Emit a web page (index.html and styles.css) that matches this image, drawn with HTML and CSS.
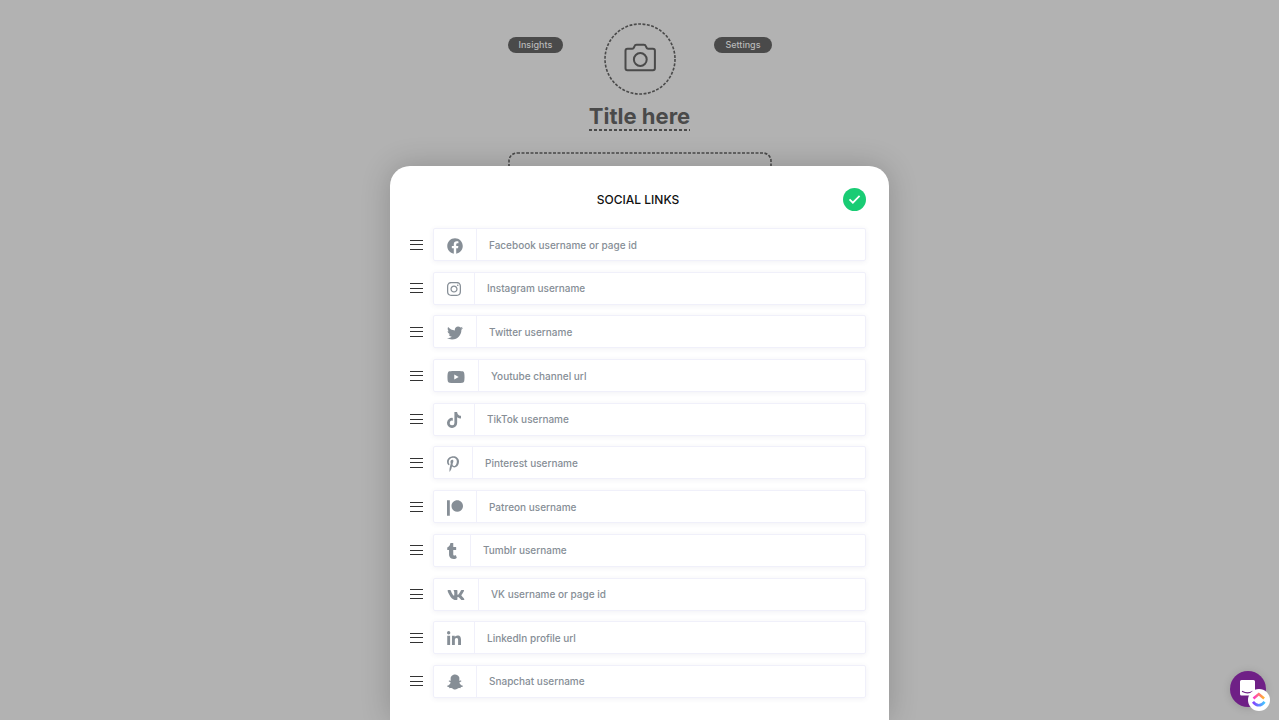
FILE: index.html
```html
<!DOCTYPE html>
<html lang="en">
<head>
<meta charset="utf-8">
<meta name="viewport" content="width=device-width, initial-scale=1">
<title>Social links</title>
<link rel="stylesheet" href="styles.css">
</head>
<body>
<main class="page">
  <div class="profile">
    <button class="pill" type="button">Insights</button>
    <button class="avatar" type="button" aria-label="Upload photo">
      <svg class="avatar-art" viewBox="0 0 72 72" fill="none" stroke="currentColor">
        <circle cx="36" cy="36" r="35" stroke-width="1.6" stroke-dasharray="2.9 1.5"/>
        <path d="M23.500 25.700h4.800q1.200 0 1.600-1.100l.6-1.500q.5-1.400 2-1.400h7.400q1.500 0 2 1.400l.6 1.500q.4 1.100 1.600 1.100h4.800q2 0 2 2v17.600q0 2-2 2h-25.400q-2 0-2-2V27.700q0-2 2-2z" stroke-width="2"/>
        <circle cx="36.300" cy="36.500" r="6.400" stroke-width="2"/>
      </svg>
    </button>
    <button class="pill" type="button">Settings</button>
  </div>
  <h1 class="title">Title here</h1>
  <div class="block">
    <svg class="block-outline" width="100%" height="100%" fill="none" stroke="currentColor"><rect x="1" y="1" width="262" height="58" rx="8" stroke-width="1.600" stroke-dasharray="3 1.500"/></svg>
  </div>
</main>

<section class="modal" role="dialog" aria-labelledby="modal-title">
  <header class="modal-head">
    <h2 class="modal-title" id="modal-title">SOCIAL LINKS</h2>
    <button class="done" type="button" aria-label="Save">
      <svg viewBox="0 0 24 24" fill="none" stroke="currentColor" stroke-width="1.800"><path d="M6.800 11.800l3.500 3.500 7-7"/></svg>
    </button>
  </header>
  <ul class="links">
    <li class="row"><button class="grip" type="button" aria-label="Move Facebook"></button><div class="field"><label class="brand" for="facebook"><svg viewBox="0 0 512 512" width="16" height="16" role="img" aria-label="Facebook"><path d="M504 256C504 119 393 8 256 8S8 119 8 256c0 123.780 90.690 226.380 209.250 245V327.690h-63V256h63v-54.640c0-62.150 37-96.480 93.670-96.480 27.140 0 55.520 4.840 55.520 4.840v61h-31.280c-30.800 0-40.410 19.120-40.410 38.730V256h68.780l-11 71.690h-57.780V501C413.310 482.380 504 379.780 504 256z"/></svg></label><input class="entry" id="facebook" type="text" placeholder="Facebook username or page id"></div></li>
    <li class="row"><button class="grip" type="button" aria-label="Move Instagram"></button><div class="field"><label class="brand" for="instagram"><svg viewBox="0 0 448 512" width="14" height="16" role="img" aria-label="Instagram"><path d="M224.100 141c-63.600 0-114.900 51.300-114.900 114.900s51.300 114.900 114.900 114.900S339 319.500 339 255.900 287.700 141 224.100 141zm0 189.600c-41.100 0-74.700-33.500-74.700-74.700s33.500-74.700 74.700-74.700 74.700 33.500 74.700 74.700-33.600 74.700-74.700 74.700zm146.400-194.300c0 14.900-12 26.800-26.800 26.800-14.900 0-26.800-12-26.800-26.800s12-26.800 26.800-26.800 26.800 12 26.800 26.800zm76.100 27.200c-1.700-35.900-9.900-67.700-36.200-93.900-26.200-26.200-58-34.400-93.900-36.200-37-2.100-147.900-2.100-184.900 0-35.800 1.700-67.600 9.900-93.900 36.100s-34.400 58-36.200 93.900c-2.100 37-2.100 147.900 0 184.900 1.700 35.900 9.900 67.700 36.200 93.900s58 34.400 93.900 36.200c37 2.100 147.900 2.100 184.900 0 35.900-1.700 67.700-9.900 93.900-36.200 26.200-26.200 34.400-58 36.200-93.900 2.100-37 2.100-147.800 0-184.800zM398.800 388c-7.800 19.600-22.900 34.700-42.600 42.600-29.500 11.700-99.500 9-132.100 9s-102.700 2.600-132.100-9c-19.600-7.800-34.700-22.900-42.600-42.600-11.700-29.500-9-99.500-9-132.100s-2.600-102.700 9-132.100c7.800-19.600 22.900-34.700 42.600-42.600 29.500-11.700 99.500-9 132.100-9s102.700-2.600 132.100 9c19.600 7.800 34.700 22.900 42.600 42.600 11.700 29.500 9 99.500 9 132.100s2.700 102.700-9 132.100z"/></svg></label><input class="entry" id="instagram" type="text" placeholder="Instagram username"></div></li>
    <li class="row"><button class="grip" type="button" aria-label="Move Twitter"></button><div class="field"><label class="brand" for="twitter"><svg viewBox="0 0 512 512" width="16" height="16" role="img" aria-label="Twitter"><path d="M459.370 151.716c.325 4.548.325 9.097.325 13.645 0 138.720-105.583 298.558-298.558 298.558-59.452 0-114.680-17.219-161.137-47.106 8.447.974 16.568 1.299 25.340 1.299 49.055 0 94.213-16.568 130.274-44.832-46.132-.975-84.792-31.188-98.112-72.772 6.498.974 12.995 1.624 19.818 1.624 9.421 0 18.843-1.300 27.614-3.573-48.081-9.747-84.143-51.980-84.143-102.985v-1.299c13.969 7.797 30.214 12.670 47.431 13.319-28.264-18.843-46.781-51.005-46.781-87.391 0-19.492 5.197-37.360 14.294-52.954 51.655 63.675 129.300 105.258 216.365 109.807-1.624-7.797-2.599-15.918-2.599-24.040 0-57.828 46.782-104.934 104.934-104.934 30.213 0 57.502 12.670 76.670 33.137 23.715-4.548 46.456-13.320 66.599-25.340-7.798 24.366-24.366 44.833-46.132 57.827 21.117-2.273 41.584-8.122 60.426-16.243-14.292 20.791-32.161 39.308-52.628 54.253z"/></svg></label><input class="entry" id="twitter" type="text" placeholder="Twitter username"></div></li>
    <li class="row"><button class="grip" type="button" aria-label="Move Youtube"></button><div class="field"><label class="brand" for="youtube"><svg viewBox="0 0 576 512" width="18" height="16" role="img" aria-label="Youtube"><path d="M549.655 124.083c-6.281-23.650-24.787-42.276-48.284-48.597C458.781 64 288 64 288 64S117.220 64 74.629 75.486c-23.497 6.322-42.003 24.947-48.284 48.597-11.412 42.867-11.412 132.305-11.412 132.305s0 89.438 11.412 132.305c6.281 23.650 24.787 41.500 48.284 47.821C117.220 448 288 448 288 448s170.780 0 213.371-11.486c23.497-6.321 42.003-24.171 48.284-47.821 11.412-42.867 11.412-132.305 11.412-132.305s0-89.438-11.412-132.305zm-317.510 213.508V175.185l142.739 81.205-142.739 81.201z"/></svg></label><input class="entry" id="youtube" type="text" placeholder="Youtube channel url"></div></li>
    <li class="row"><button class="grip" type="button" aria-label="Move TikTok"></button><div class="field"><label class="brand" for="tiktok"><svg viewBox="0 0 448 512" width="14" height="16" role="img" aria-label="TikTok"><path d="M448 209.910a210.060 210.060 0 0 1-122.770-39.250V349.380A162.550 162.550 0 1 1 185 188.310V278.200a74.620 74.620 0 1 0 52.230 71.180V0h88a121.180 121.180 0 0 0 1.860 22.170A122.180 122.180 0 0 0 381 102.390a121.430 121.430 0 0 0 67 20.140z"/></svg></label><input class="entry" id="tiktok" type="text" placeholder="TikTok username"></div></li>
    <li class="row"><button class="grip" type="button" aria-label="Move Pinterest"></button><div class="field"><label class="brand" for="pinterest"><svg viewBox="0 0 384 512" width="12" height="16" role="img" aria-label="Pinterest"><path d="M204 6.500C101.400 6.500 0 74.900 0 185.600 0 256 39.600 296 63.600 296c9.900 0 15.600-27.600 15.600-35.400 0-9.300-23.700-29.100-23.700-67.800 0-80.400 61.200-137.400 140.400-137.400 68.100 0 118.500 38.700 118.500 109.800 0 53.100-21.300 152.700-90.300 152.700-24.900 0-46.200-18-46.200-43.800 0-37.800 26.400-74.400 26.400-113.400 0-66.200-93.900-54.200-93.900 25.800 0 16.800 2.100 35.400 9.600 50.700-13.800 59.400-42 147.900-42 209.100 0 18.900 2.700 37.500 4.500 56.400 3.400 3.800 1.700 3.400 6.900 1.500 50.400-69 48.600-82.500 71.400-172.800 12.300 23.400 44.100 36 69.300 36 106.200 0 153.900-103.500 153.900-196.800C384 71.300 298.200 6.500 204 6.500z"/></svg></label><input class="entry" id="pinterest" type="text" placeholder="Pinterest username"></div></li>
    <li class="row"><button class="grip" type="button" aria-label="Move Patreon"></button><div class="field"><label class="brand" for="patreon"><svg viewBox="0 0 512 512" width="16" height="16" role="img" aria-label="Patreon"><path d="M512 194.800c0 101.300-82.400 183.800-183.800 183.800-101.700 0-184.400-82.400-184.400-183.800 0-101.600 82.700-184.300 184.400-184.300C429.600 10.500 512 93.200 512 194.800zM0 501.500h90v-491H0v491z"/></svg></label><input class="entry" id="patreon" type="text" placeholder="Patreon username"></div></li>
    <li class="row"><button class="grip" type="button" aria-label="Move Tumblr"></button><div class="field"><label class="brand" for="tumblr"><svg viewBox="0 0 320 512" width="10" height="16" role="img" aria-label="Tumblr"><path d="M309.800 480.300c-13.600 14.500-50 31.700-97.400 31.700-120.800 0-147-88.800-147-140.600v-144H17.900c-5.500 0-10-4.500-10-10v-68c0-7.200 4.500-13.600 11.300-16 62-21.800 81.500-76 84.300-117.100.8-11 6.500-16.300 16.100-16.300h70.900c5.500 0 10 4.500 10 10v115.200h83c5.500 0 10 4.400 10 9.900v81.700c0 5.500-4.500 10-10 10h-83.400V360c0 34.200 23.700 53.600 68 35.800 4.800-1.900 9-3.200 12.700-2.200 3.500.9 5.800 3.400 7.400 7.900l22 64.300c1.800 5 3.300 10.600-.4 14.500z"/></svg></label><input class="entry" id="tumblr" type="text" placeholder="Tumblr username"></div></li>
    <li class="row"><button class="grip" type="button" aria-label="Move VK"></button><div class="field"><label class="brand" for="vk"><svg viewBox="0 0 576 512" width="18" height="16" role="img" aria-label="VK"><path d="M545 117.700c3.700-12.500 0-21.700-17.800-21.700h-58.900c-15 0-21.900 7.900-25.600 16.700 0 0-30 73.100-72.400 120.500-13.700 13.700-20 18.100-27.500 18.100-3.700 0-9.400-4.400-9.400-16.900V117.700c0-15-4.200-21.700-16.600-21.700h-92.600c-9.400 0-15 7-15 13.500 0 14.200 21.200 17.500 23.400 57.500v86.800c0 19-3.400 22.500-10.900 22.500-20 0-68.600-73.400-97.400-157.400-5.800-16.300-11.500-22.900-26.600-22.900H38.800c-16.800 0-20.200 7.900-20.200 16.700 0 15.600 20 93.100 93.100 195.500C160.400 378.100 229 416 291.400 416c37.500 0 42.100-8.400 42.100-22.900 0-66.800-3.400-73.100 15.400-73.100 8.700 0 23.700 4.400 58.700 38.100 40 40 46.600 57.900 69 57.900h58.900c16.800 0 25.300-8.400 20.400-25-11.200-34.900-86.900-106.700-90.300-111.500-8.700-11.200-6.200-16.200 0-26.200.1-.1 72-101.300 79.400-135.600z"/></svg></label><input class="entry" id="vk" type="text" placeholder="VK username or page id"></div></li>
    <li class="row"><button class="grip" type="button" aria-label="Move LinkedIn"></button><div class="field"><label class="brand" for="linkedin"><svg viewBox="0 0 448 512" width="14" height="16" role="img" aria-label="LinkedIn"><path d="M100.280 448H7.400V148.900h92.880zM53.790 108.100C24.090 108.100 0 83.500 0 53.800a53.790 53.790 0 0 1 107.580 0c0 29.700-24.100 54.300-53.790 54.300zM447.900 448h-92.680V302.400c0-34.700-.7-79.200-48.290-79.200-48.290 0-55.690 37.700-55.690 76.700V448h-92.780V148.900h89.080v40.800h1.300c12.400-23.500 42.690-48.300 87.880-48.300 94 0 111.280 61.900 111.280 142.300V448z"/></svg></label><input class="entry" id="linkedin" type="text" placeholder="LinkedIn profile url"></div></li>
    <li class="row"><button class="grip" type="button" aria-label="Move Snapchat"></button><div class="field"><label class="brand" for="snapchat"><svg viewBox="0 0 512 512" width="16" height="16" role="img" aria-label="Snapchat"><path d="M510.846 392.673c-5.211 12.157-27.239 21.089-67.360 27.318-2.064 2.786-3.775 14.686-6.507 23.956-1.625 5.566-5.623 8.869-12.128 8.869l-.297-.005c-9.395 0-19.203-4.323-38.852-4.323-26.521 0-35.662 6.043-56.254 20.588-21.832 15.438-42.771 28.764-74.027 27.399-31.646 2.334-58.025-16.908-72.871-27.404-20.714-14.643-29.828-20.582-56.241-20.582-18.864 0-30.736 4.720-38.852 4.720-8.073 0-11.213-4.922-12.422-9.040-2.703-9.189-4.404-21.263-6.523-24.130-20.679-3.209-67.310-11.344-68.498-32.150a10.627 10.627 0 0 1 8.877-11.069c69.583-11.455 100.924-82.901 102.227-85.934.074-.176.155-.344.237-.515 3.713-7.537 4.544-13.849 2.463-18.753-5.050-11.896-26.872-16.164-36.053-19.796-23.715-9.366-27.015-20.128-25.612-27.504 2.437-12.836 21.725-20.735 33.002-15.453 8.919 4.181 16.843 6.297 23.547 6.297 5.022 0 8.212-1.204 9.960-2.171-2.043-35.936-7.101-87.290 5.687-115.969C158.122 21.304 229.705 15.420 250.826 15.420c.944 0 9.141-.089 10.110-.089 52.148 0 102.254 26.780 126.723 81.643 12.777 28.650 7.749 79.792 5.695 116.009 1.582.872 4.357 1.942 8.599 2.139 6.397-.286 13.815-2.389 22.069-6.257 6.085-2.846 14.406-2.461 20.480.058l.029.010c9.476 3.385 15.439 10.215 15.589 17.870.184 9.747-8.522 18.165-25.878 25.018-2.118.835-4.694 1.655-7.434 2.525-9.797 3.106-24.600 7.805-28.616 17.271-2.079 4.904-1.256 11.211 2.460 18.748.087.168.166.342.239.515 1.301 3.030 32.615 74.460 102.230 85.934 6.427 1.058 11.163 7.877 7.725 15.859z"/></svg></label><input class="entry" id="snapchat" type="text" placeholder="Snapchat username"></div></li>
  </ul>
</section>

<div class="support">
  <button class="chat" type="button" aria-label="Open chat">
    <svg viewBox="0 0 36 36"><path d="M11.500 9h12q1.500 0 1.500 1.500v15l-3-1H11.500q-1.500 0-1.500-1.500V10.500q0-1.500 1.500-1.500z" fill="#fff"/><path d="M12.500 20.500q5 2.800 10 0" fill="none" stroke="#6f2086" stroke-width="1.300" stroke-linecap="round"/></svg>
  </button>
  <button class="tasks" type="button" aria-label="Open tasks">
    <svg viewBox="0 0 22 22" fill="none" stroke-width="2.600">
      <defs>
        <linearGradient id="warm"><stop offset="0" stop-color="#ff35c8"/><stop offset="1" stop-color="#ffb52b"/></linearGradient>
        <linearGradient id="cool"><stop offset="0" stop-color="#843dff"/><stop offset="1" stop-color="#43c7ff"/></linearGradient>
      </defs>
      <path d="M5.500 9.500l5.300-4.400 5.300 4.400" stroke="url(#warm)"/><path d="M5 12.800q5.800 7 11.600 0" stroke="url(#cool)"/>
    </svg>
  </button>
</div>
</body>
</html>
```

FILE: styles.css
```css
* { box-sizing: border-box; }

body {
  margin: 0;
  min-height: 100vh;
  overflow: hidden;
  background: #b2b2b2;
  color: #4a4a4a;
  font-family: Inter, "Open Sans", sans-serif;
}

button {
  padding: 0;
  border: 0;
  background: none;
  color: inherit;
  font: inherit;
}

svg { display: block; }

.page {
  display: flex;
  flex-direction: column;
  align-items: center;
  width: 100%;
  max-width: 264px;
  margin: 0 auto;
  padding-top: 23px;
}

.profile {
  display: grid;
  grid-template-columns: 1fr auto 1fr;
  align-items: start;
  justify-items: start;
  width: 100%;
}

.pill {
  margin-top: 14px;
  padding: 0 11px;
  border-radius: 8px;
  background: #4a4a4a;
  color: #b8b8b8;
  font-size: 9px;
  font-weight: 500;
  line-height: 16px;
}

.pill:last-child { justify-self: end; }

.avatar-art { width: 72px; height: 72px; }

.title {
  margin: 8px 0 0;
  padding-bottom: 1px;
  background: repeating-linear-gradient(90deg, #4a4a4a 0 3px, transparent 3px 5px) bottom / 100% 2px no-repeat;
  font-size: 22px;
  font-weight: 700;
  line-height: 27px;
}

.block {
  width: 100%;
  height: 60px;
  margin-top: 21px;
}

.modal {
  position: absolute;
  top: 166px;
  left: 0;
  right: 0;
  width: 100%;
  max-width: 499px;
  min-height: calc(100vh - 166px);
  margin: 0 auto;
  padding: 22px 23px 22px 20px;
  border-radius: 20px 20px 0 0;
  background: #fff;
  box-shadow: 0 0 30px rgba(0, 0, 0, 0.2);
}

.modal-head {
  display: grid;
  grid-template-columns: 1fr auto 1fr;
  align-items: center;
}

.modal-title {
  grid-column: 2;
  margin: 0;
  color: #111;
  font-size: 12px;
  font-weight: 500;
  line-height: 16px;
}

.done {
  justify-self: end;
  width: 23px;
  height: 23px;
  border-radius: 50%;
  background: #19cc74;
  color: #fff;
}

.links {
  display: flex;
  flex-direction: column;
  justify-content: space-between;
  min-height: 470px;
  margin: 17px 0 0;
  padding: 0;
  list-style: none;
}

.row {
  display: flex;
  align-items: center;
  gap: 10px;
}

.grip {
  width: 13px;
  height: 10px;
  border: solid #333;
  border-width: 1px 0;
  background: linear-gradient(#333, #333) center / 100% 1px no-repeat;
}

.field {
  display: flex;
  flex: 1;
  height: 33px;
  border: 1px solid #f0f0fa;
  border-radius: 2px;
  box-shadow: 0 1px 5px rgba(80, 80, 130, 0.08);
}

.brand {
  display: flex;
  align-items: center;
  padding: 2px 13px 0;
  border-right: 1px solid #f0f0fa;
  fill: #868e96;
}

.entry {
  flex: 1;
  min-width: 0;
  padding: 0 12px;
  border: 0;
  outline: 0;
  background: none;
  color: #495057;
  font: 500 10px/16px Inter, "Open Sans", sans-serif;
}

.entry::placeholder { color: #868e96; opacity: 1; }

.support {
  position: fixed;
  right: 9px;
  bottom: 9px;
  display: grid;
  width: 40px;
  height: 40px;
}

.chat,
.tasks {
  grid-area: 1 / 1;
  border-radius: 50%;
}

.chat {
  width: 36px;
  height: 36px;
  background: #6f2086;
  box-shadow: 0 1px 8px rgba(0, 0, 0, 0.15);
}

.tasks {
  place-self: end;
  width: 22px;
  height: 22px;
  background: #fff;
}
```
